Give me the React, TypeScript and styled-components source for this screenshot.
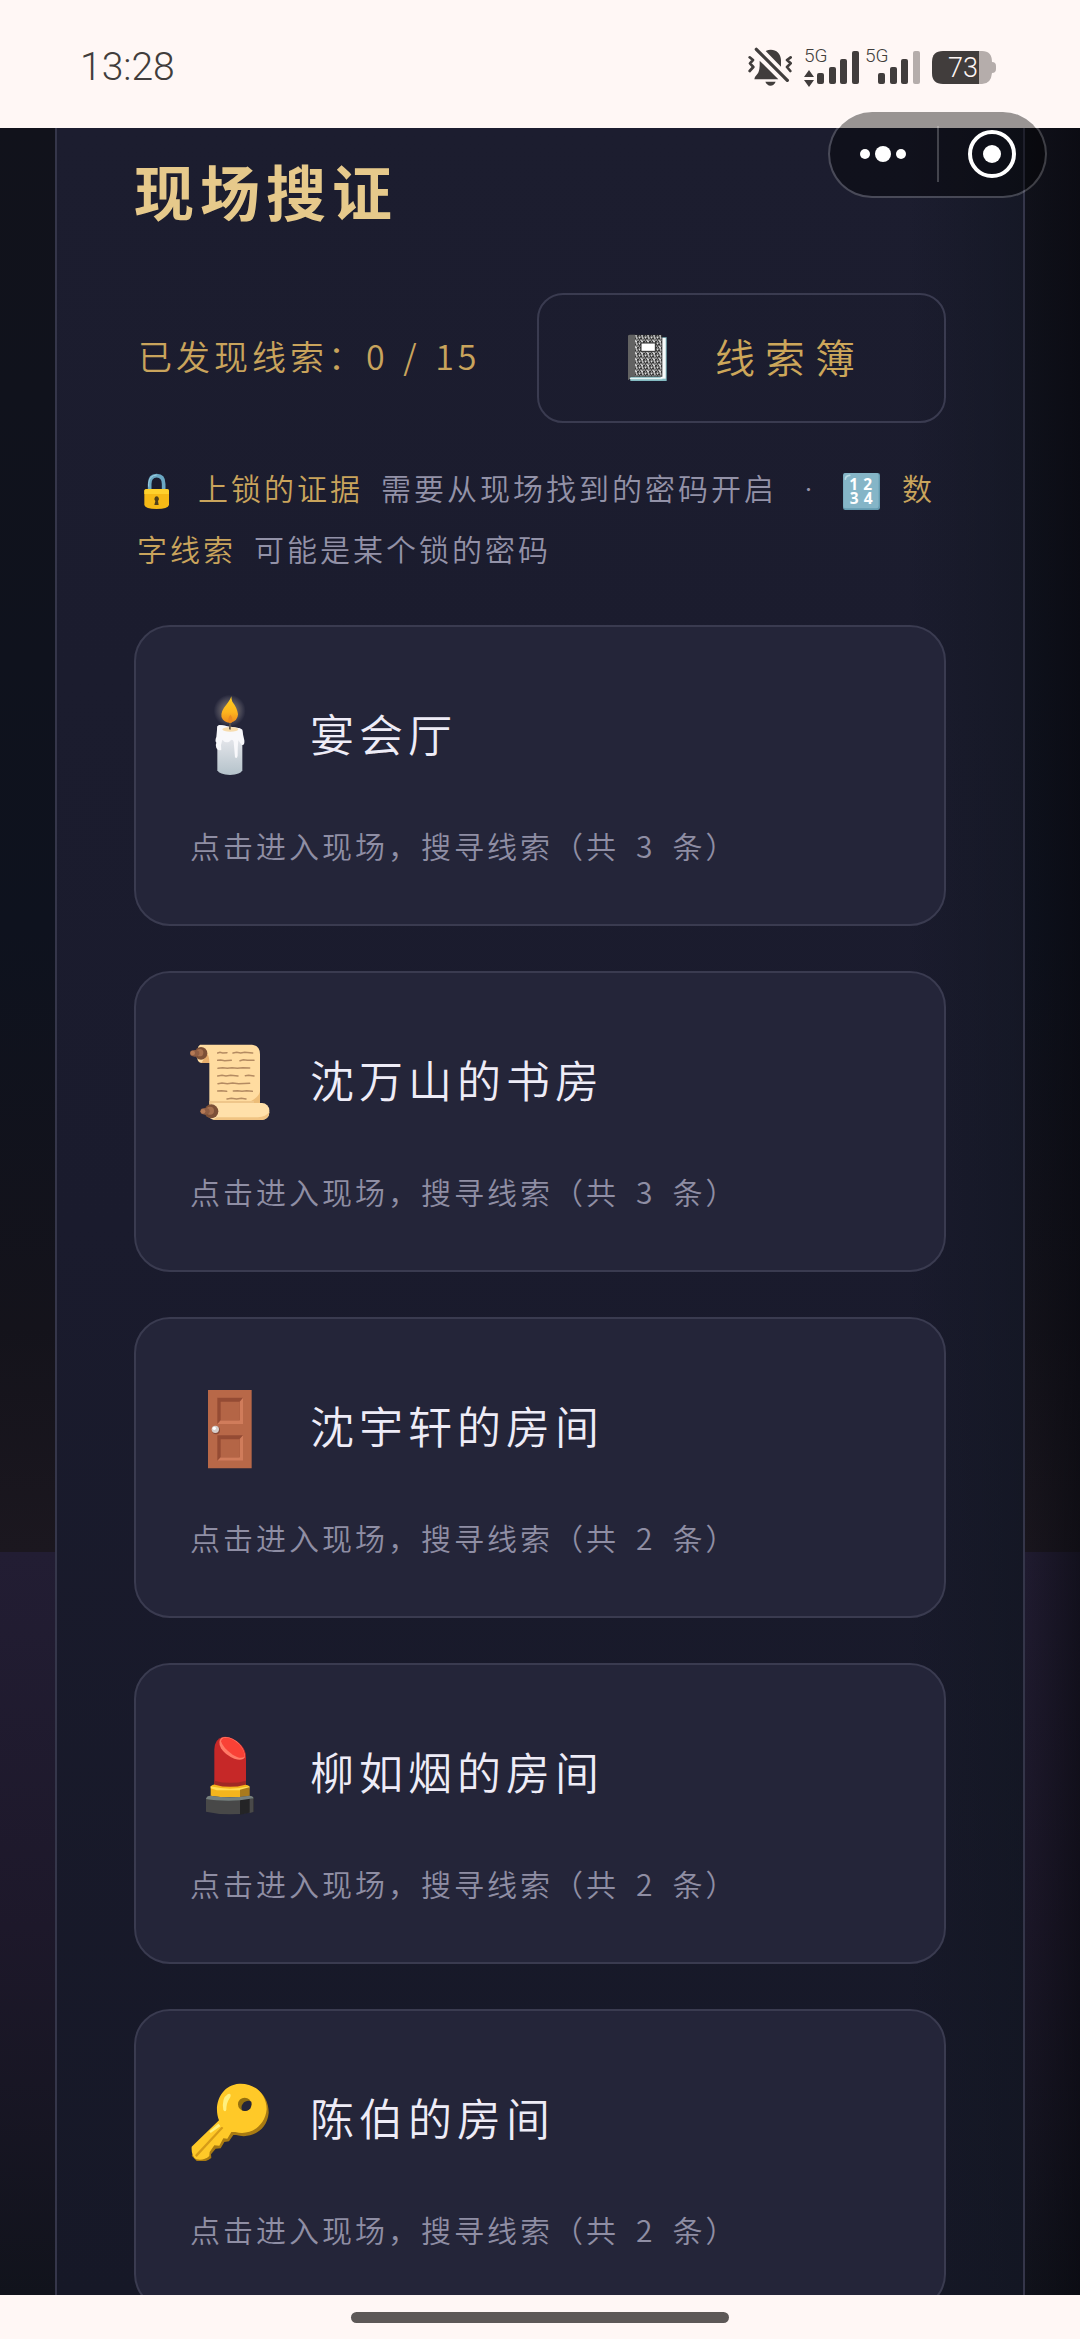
import { ReactNode } from "react";
import styled, { createGlobalStyle } from "styled-components";

const GlobalStyle = createGlobalStyle`
    * {
        box-sizing: border-box;
    }
    body {
        margin: 0;
        background: #fff7f5;
        font-family: "Noto Sans CJK SC", sans-serif;
        font-weight: 350;
    }
    h1, h2, p {
        margin: 0;
    }
    button {
        font: inherit;
        color: inherit;
        cursor: pointer;
    }
`;
const Page = styled.div`
    display: flex;
    flex-direction: column;
    height: 100vh;
    position: relative;
`;
const StatusBar = styled.header`
    display: flex;
    justify-content: space-between;
    flex: none;
    height: 128px;
    padding: 42px 80px 0 80px;
    background: #fff7f5;
    color: #413d3c;
`;
const Clock = styled.time`
    font-family: Roboto, sans-serif;
    font-size: 39px;
    font-weight: 300;
    line-height: 50px;
`;
const StatusIcons = styled.div`
    display: flex;
    height: 48px;

    svg {
        display: block;
    }
    text {
        font-family: Roboto, sans-serif;
        font-weight: 300;
    }
`;
const Capsule = styled.div`
    position: absolute;
    top: 110px;
    right: 33px;
    display: flex;
    align-items: center;
    width: 219px;
    height: 88px;
    border: 2px solid rgba(255, 255, 255, 0.2);
    border-radius: 44px;
    background: rgba(0, 0, 0, 0.4);
    background-clip: padding-box;
`;
const CapsuleButton = styled.button`
    display: flex;
    align-items: center;
    justify-content: center;
    flex: 1;
    height: 100%;
    padding: 0;
    border: 0;
    background: none;

    & + & {
        height: 56px;
        border-left: 2px solid rgba(255, 255, 255, 0.22);
    }
`;
const Scene = styled.main`
    flex: 1;
    min-height: 0;
    padding: 0 55px;
    overflow: hidden;
    background:
        linear-gradient(90deg, rgba(8, 8, 14, 0) 94%, rgba(8, 8, 14, 0.6) 100%),
        linear-gradient(180deg, #11121b 0, #0e121e 800px, #14131b 1200px, #1b171f 1424px, #221d33 1424px, #1d182a 1800px, #11131c 100%);
`;
const Panel = styled.section`
    min-height: 100%;
    padding: 20px 77px 48px;
    border: solid #35364a;
    border-width: 0 2px;
    background:
        linear-gradient(90deg, rgba(17, 21, 32, 0) 88%, rgba(17, 21, 32, 0.6) 100%),
        linear-gradient(180deg, #1c1d2f 0, #1a1b2d 1100px, #161827 2167px);
`;
const Title = styled.h1`
    color: #e6c98b;
    font-size: 60px;
    font-weight: 700;
    line-height: 84px;
    letter-spacing: 6px;
`;
const Toolbar = styled.div`
    display: flex;
    align-items: center;
    justify-content: space-between;
    margin-top: 61px;
`;
const Progress = styled.p`
    padding: 0 0 4px 4px;
    color: #c9a45c;
    font-size: 34px;
    line-height: 48px;
    letter-spacing: 4px;
`;
const Slash = styled.span`
    margin: 0 3px;
`;
const NotebookButton = styled.button`
    display: flex;
    align-items: center;
    gap: 39px;
    height: 130px;
    padding: 0 79px;
    border: 2px solid #3a3b50;
    border-radius: 26px;
    background: none;
    color: #cda75a;
    font-size: 40px;
    letter-spacing: 10px;
`;
const ButtonLabel = styled.span`
    padding-bottom: 4px;
`;
const Hint = styled.p`
    margin-top: 35px;
    padding-left: 3px;
    color: #9392a8;
    font-size: 30px;
    line-height: 59px;
    letter-spacing: 3px;

    strong {
        margin-right: 18px;
        color: #c9a45c;
        font-weight: 350;
    }
    svg {
        margin-right: 22px;
        vertical-align: middle;
    }
`;
const Dot = styled.span`
    display: inline-block;
    width: 66px;
    font-family: Inter, sans-serif;
    text-align: center;
`;
const SceneList = styled.div`
    display: grid;
    gap: 45px;
    margin-top: 47px;
`;
const Card = styled.button`
    display: flex;
    flex-direction: column;
    gap: 36px;
    padding: 56px 52px;
    border: 2px solid #3a3b50;
    border-radius: 36px;
    background: #242539;
    text-align: left;
`;
const CardHead = styled.span`
    display: flex;
    align-items: center;
    gap: 38px;
    height: 104px;
`;
const CardName = styled.span`
    padding-bottom: 4px;
    color: #eeecf7;
    font-size: 44px;
    letter-spacing: 5px;
`;
const CardText = styled.span`
    padding-left: 2px;
    color: #8f8ea4;
    font-size: 30px;
    line-height: 45px;
    letter-spacing: 3px;
`;
const Count = styled.span`
    margin: 0 17px;
`;
const HomeBar = styled.footer`
    display: flex;
    justify-content: center;
    align-items: center;
    flex: none;
    height: 44px;
    background: #fff7f5;

    span {
        width: 35%;
        height: 11px;
        border-radius: 6px;
        background: #5d5857;
    }
`;

const CandleIcon = () => (
    <svg width="84" height="84" viewBox="54 42 252 252">
        <defs>
            <radialGradient id="glow">
                <stop offset="0.3" stopColor="#c9b48a" stopOpacity="0.5" />
                <stop offset="1" stopColor="#c9c9d8" stopOpacity="0" />
            </radialGradient>
            <linearGradient id="flame" x1="0" y1="0" x2="0" y2="1">
                <stop offset="0" stopColor="#ffcf1f" />
                <stop offset="0.6" stopColor="#fdb51f" />
                <stop offset="1" stopColor="#ee8a1c" />
            </linearGradient>
            <linearGradient id="wax" x1="0" y1="0" x2="0" y2="1">
                <stop offset="0.2" stopColor="#e9e9ee" />
                <stop offset="1" stopColor="#b4c2ca" />
            </linearGradient>
        </defs>
        <circle cx="179" cy="95" r="48" fill="url(#glow)" />
        <path d="M142 146Q142 137 150 138L206 147Q217 149 217 158V274Q212 287 180 288Q148 287 142 274Z" fill="url(#wax)" />
        <path d="M142 142Q158 134 178 146Q204 144 217 152Q219 168 223 184Q225 200 215 198L205 184Q203 200 203 230Q201 240 195 235L191 188Q187 176 178 188Q166 194 157 182Q151 196 154 212Q145 217 139 207Q136 196 139 191Q134 186 139 174Z" fill="#f8f8fb" />
        <ellipse cx="181" cy="151" rx="24" ry="7" fill="#f7dcae" />
        <path d="M177 151L178 126H183L182 152Z" fill="#5d5348" />
        <path d="M184 52Q180 65 162 86Q148 108 158 121Q167 132 181 131Q203 127 204 106Q202 87 187 68Q184 60 184 52Z" fill="url(#flame)" />
        <path d="M181 107Q170 122 178 131H185Q191 119 181 107Z" fill="#e98a23" />
    </svg>
);
const ScrollIcon = () => (
    <svg width="84" height="84" viewBox="54 60 252 252">
        <path d="M90 77H246Q270 80 270 106V262H118V132H96Q85 132 82 120V92Q84 80 90 77Z" fill="#ffdca0" />
        <path d="M118 132H94L112 105Q118 112 118 132Z" fill="#e7ae6c" />
        <path d="M270 216Q268 236 232 252H270Z" fill="#edbd78" />
        <path d="M118 246H252V256H118Z" fill="#efc68a" />
        <rect x="112" y="252" width="186" height="51" rx="22" fill="#ffe0aa" />
        <path d="M128 303H276Q296 301 298 279Q288 293 264 295H140Z" fill="#f0c382" />
        <g fill="none" stroke="#b48b62" strokeWidth="4.5" strokeLinecap="round">
            <path d="M143 102L150 100L158 102L171 101M189 102L200 100L212 102L224 100L248 102M143 124L152 123L164 125L184 124M210 125L220 122L232 124L252 124M144 148L158 146L172 148L186 146L202 148L218 146L239 147M143 171L156 169L168 171L182 169L204 171M226 170L236 169L252 171M144 194L156 192L172 194L188 192L206 194L239 193M143 216L154 215L170 217M190 216L202 215L216 217L230 215L247 217M171 240L184 238L200 240L214 238L228 240" />
        </g>
        <circle cx="93" cy="103" r="19" fill="#7d5037" />
        <circle cx="89" cy="101" r="11" fill="#a56f4e" />
        <ellipse cx="74" cy="103" rx="14" ry="10" fill="#8e5d43" />
        <circle cx="68" cy="102" r="7" fill="#b57a56" />
        <circle cx="124" cy="277" r="21" fill="#7d5037" />
        <circle cx="120" cy="275" r="12" fill="#a56f4e" />
        <ellipse cx="105" cy="277" rx="14" ry="10" fill="#8e5d43" />
        <circle cx="99" cy="277" r="7" fill="#b57a56" />
    </svg>
);
const DoorIcon = () => (
    <svg width="84" height="84" viewBox="54 48 252 252">
        <path d="M114 63H245V298H114Z" fill="#b86848" />
        <path d="M142 86H219V165H142ZM142 199H219V275H142Z" fill="#944b34" />
        <path d="M219 86V165H142L152 154H209V98ZM219 199V275H142L152 265H209V210Z" fill="#d07c5b" />
        <path d="M152 98H209V154H152ZM152 211H209V265H152Z" fill="#b46546" />
        <circle cx="138" cy="184" r="12" fill="#8a4a37" />
        <circle cx="136" cy="181" r="11" fill="#d5cecb" />
        <circle cx="133" cy="178" r="5" fill="#fff" />
    </svg>
);
const LipstickIcon = () => (
    <svg width="84" height="84" viewBox="54 36 252 252">
        <path d="M133 198V91Q135 59 158 54Q185 49 214 79Q228 94 228 115V198Z" fill="#c62828" />
        <path d="M133 185Q181 198 228 185V205H133Z" fill="#9f2824" />
        <path d="M155 56Q181 48 208 74Q226 94 225 114Q218 127 193 119Q165 108 153 88Q142 67 155 56Z" fill="#ff7a67" />
        <path d="M161 57Q184 52 207 76Q224 94 224 113Q211 122 188 107Q158 86 153 67Q154 60 161 57Z" fill="#f94136" />
        <path d="M122 202Q128 196 135 197Q180 210 226 197Q235 197 238 202V234H122Z" fill="#f4b51d" />
        <path d="M122 202Q180 216 238 202V208L210 214H140L122 208Z" fill="#ffdd55" />
        <path d="M210 212L238 205V238H210Z" fill="#a87a1d" />
        <path d="M108 240Q110 230 122 230Q180 240 238 230Q249 230 251 240V278Q180 294 108 278Z" fill="#484848" />
        <path d="M210 239L251 234V278L210 287Z" fill="#242426" />
        <path d="M239 240L250 236V279L239 282Z" fill="#494949" />
        <path d="M108 240Q110 230 122 230Q180 240 238 230Q249 230 251 238L210 244Q150 247 108 240Z" fill="#75807e" />
    </svg>
);
const KeyIcon = () => (
    <svg width="84" height="84" viewBox="54 54 252 252">
        <path d="M218 78C276 80 297 128 296 162C291 216 242 241 198 228L190 228L177 247L163 249L152 268L137 269L123 286L124 297Q104 312 82 308L65 290L145 190Z" fill="#a87a12" />
        <path d="M208 74C257 72 290 108 290 151C285 204 238 231 196 219L184 219L172 239L160 238L148 260L133 259L119 279L118 291Q101 306 79 301Q63 292 65 263L147 184C129 139 151 78 208 74Z" fill="#ffc928" />
        <ellipse cx="224" cy="136" rx="20" ry="20" fill="#94700f" />
        <path d="M244 128Q247 143 237 152Q227 159 216 154Q211 141 222 130Q233 121 244 128Z" fill="#242539" />
        <path d="M75 289L154 204Q158 203 160 207L80 294Z" fill="#d69b18" />
        <path d="M180 104Q185 109 178 119Q169 132 169 152Q166 161 160 153Q154 117 174 105ZM118 217L145 194Q150 198 151 202L122 222Z" fill="#fff07f" />
    </svg>
);
const NotebookIcon = () => (
    <svg width="58" height="58" viewBox="297 178 174 174">
        <defs>
            <pattern id="speckle" width="18" height="18" patternUnits="userSpaceOnUse">
                <path d="M0 2H5V6H2V10H0ZM8 0H11V5H15V8H9V5H7ZM4 11H8V15H12V18H6V15H3ZM13 11H18V14H15V16H13ZM16 2H18V5H16ZM9 10H11V13H9ZM1 15H3V18H1Z" fill="#f1f1f1" />
            </pattern>
        </defs>
        <path d="M334 203H443V334H334Z" fill="#83bac1" />
        <path d="M425 205H440V327H425Z" fill="#f8fbfb" />
        <path d="M327 198Q328 195 334 195H430V321H334L329 331H327Z" fill="#292929" />
        <path d="M348 197H428V320H348Z" fill="url(#speckle)" />
        <path d="M327 198Q328 195 334 195H348V321H334L329 331H327Z" fill="#626262" />
        <path d="M332 324H430V329H332Z" fill="#e5f3f3" />
        <path d="M366 220H409V245H366Z" fill="#fff" stroke="#292929" strokeWidth="3" />
    </svg>
);
const LockIcon = () => (
    <svg width="39" height="39" viewBox="105 606 117 117">
        <path d="M143 665V642Q143 617 164 617Q185 617 185 642V665" fill="none" stroke="#6ba8c3" strokeWidth="11" />
        <path d="M140 650V640Q142 616 164 615" fill="none" stroke="#9fd0e2" strokeWidth="3" />
        <path d="M127 662Q127 657 134 657H194Q201 657 201 662V705Q198 717 164 717Q130 717 127 705Z" fill="#f5b916" />
        <path d="M127 662Q127 657 134 657H194Q201 657 201 662V672H127Z" fill="#ffd12c" />
        <path d="M164 679A8 8 0 0 1 168 693L170 705H157L160 693A8 8 0 0 1 164 679Z" fill="#50401b" />
    </svg>
);
const NumbersIcon = () => (
    <svg width="37" height="37" viewBox="0 0 110 110">
        <rect width="110" height="110" rx="7" fill="#659bb0" />
        <rect x="1" width="105" height="105" rx="7" fill="#85b5c7" />
        <path d="M7 18Q8 8 20 7" fill="none" stroke="#b9dbe5" strokeWidth="5" strokeLinecap="round" />
        <g fill="#fff" fontFamily="Open Sans, sans-serif" fontSize="46" fontWeight="700" textAnchor="middle">
            <text x="33" y="50">1</text>
            <text x="75" y="50">2</text>
            <text x="35" y="93">3</text>
            <text x="76" y="93">4</text>
        </g>
    </svg>
);
// Both SIM signals share one drawing, only the data arrows and the last bar differ
const Signal = ({ arrows, weak }: { arrows?: boolean; weak?: boolean }) => (
    <svg width="61" height="48" viewBox="0 0 61 48" fill="#413d3c">
        <text x="2" y="20" fontSize="19">5G</text>
        {arrows && <path d="M2 35L7 28L12 35ZM2 38H12L7 45Z" />}
        <rect x="15" y="31" width="7" height="11" rx="2" />
        <rect x="27" y="25" width="7" height="17" rx="2" />
        <rect x="38" y="17" width="7" height="25" rx="2" />
        <rect x="50" y="9" width="7" height="33" rx="2" fill={weak ? "#b5adab" : "#413d3c"} />
    </svg>
);
const BellIcon = () => (
    <svg width="54" height="48" viewBox="84 66 162 144" fill="#413d3c">
        <path d="M137 93C160 83 182 96 183 120V140ZM119 122L175 178H103Q104 170 112 162Q118 155 119 137ZM136 185H167Q162 197 151 197Q141 196 136 185Z" />
        <path d="M109 88L202 181" fill="none" stroke="#413d3c" strokeWidth="10" strokeLinecap="round" />
        <path d="M89 112L99 120L90 130L100 141L89 153M212 112L201 120L212 130L201 141L211 153" fill="none" stroke="#413d3c" strokeWidth="8" strokeLinecap="round" strokeLinejoin="round" />
    </svg>
);
const BatteryIcon = () => (
    <svg width="68" height="48" viewBox="0 0 68 48">
        <path d="M46 9H50Q60 9 60 20Q64 20 64 24V27Q64 31 60 31Q59 42 50 42H46Z" fill="#b5adab" />
        <path d="M11 9H47V42H11Q0 42 0 31V20Q0 9 11 9Z" fill="#413d3c" />
        <text x="16" y="35" fontSize="27" fill="#fff7f5">73</text>
    </svg>
);

interface IScene {
    name: string;
    clues: number;
    icon: ReactNode;
}
const scenes: IScene[] = [
    { name: "宴会厅", clues: 3, icon: <CandleIcon /> },
    { name: "沈万山的书房", clues: 3, icon: <ScrollIcon /> },
    { name: "沈宇轩的房间", clues: 2, icon: <DoorIcon /> },
    { name: "柳如烟的房间", clues: 2, icon: <LipstickIcon /> },
    { name: "陈伯的房间", clues: 2, icon: <KeyIcon /> },
];

function App() {
    return (
        <>
            <GlobalStyle />
            <Page>
                <StatusBar>
                    <Clock>13:28</Clock>
                    <StatusIcons>
                        <BellIcon />
                        <Signal arrows />
                        <Signal weak />
                        <svg width="8" height="48" />
                        <BatteryIcon />
                    </StatusIcons>
                </StatusBar>

                <Scene>
                    <Panel>
                        <Title>现场搜证</Title>
                        <Toolbar>
                            <Progress>
                                已发现线索：0 <Slash>/</Slash> 15
                            </Progress>
                            <NotebookButton>
                                <NotebookIcon />
                                <ButtonLabel>线索簿</ButtonLabel>
                            </NotebookButton>
                        </Toolbar>
                        <Hint>
                            <LockIcon />
                            <strong>上锁的证据</strong>需要从现场找到的密码开启<Dot>·</Dot>
                            <NumbersIcon />
                            <strong>数字线索</strong>可能是某个锁的密码
                        </Hint>
                        <SceneList>
                            {scenes.map((scene) => (
                                <Card key={scene.name}>
                                    <CardHead>
                                        {scene.icon}
                                        <CardName>{scene.name}</CardName>
                                    </CardHead>
                                    <CardText>
                                        点击进入现场，搜寻线索（共<Count>{scene.clues}</Count>条）
                                    </CardText>
                                </Card>
                            ))}
                        </SceneList>
                    </Panel>
                </Scene>

                <HomeBar>
                    <span />
                </HomeBar>

                <Capsule>
                    <CapsuleButton aria-label="更多">
                        <svg width="48" height="20" viewBox="0 0 48 20" fill="#fff">
                            <circle cx="6" cy="10" r="5" />
                            <circle cx="24" cy="10" r="8" />
                            <circle cx="42" cy="10" r="5" />
                        </svg>
                    </CapsuleButton>
                    <CapsuleButton aria-label="关闭">
                        <svg width="50" height="50" viewBox="0 0 50 50">
                            <circle cx="25" cy="25" r="22" fill="none" stroke="#fff" strokeWidth="4" />
                            <circle cx="25" cy="25" r="9" fill="#fff" />
                        </svg>
                    </CapsuleButton>
                </Capsule>
            </Page>
        </>
    );
}

export default App;
